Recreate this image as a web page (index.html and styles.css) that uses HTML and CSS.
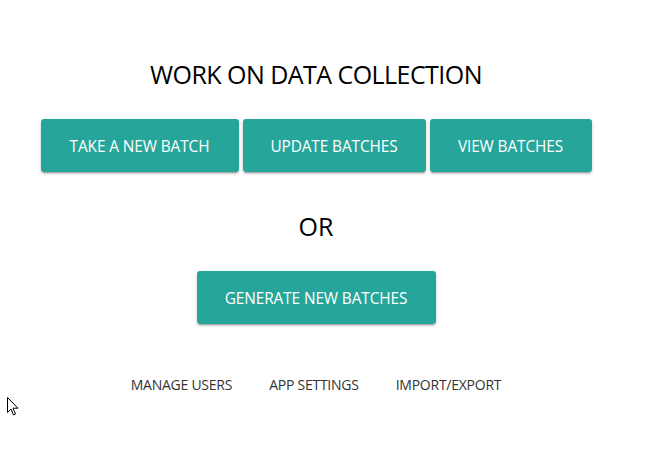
FILE: index.html
```html
<!DOCTYPE html>
<html>
<head>
<meta charset="utf-8">
<link rel="stylesheet" href="styles.css">
</head>
<body>
<main class="page">
  <h1 class="title">WORK ON DATA COLLECTION</h1>
  <div class="row">
    <a class="btn btn-take">TAKE A NEW BATCH</a>
    <a class="btn btn-update">UPDATE BATCHES</a>
    <a class="btn btn-view">VIEW BATCHES</a>
  </div>
  <h2 class="or">OR</h2>
  <div class="row">
    <a class="btn btn-gen">GENERATE NEW BATCHES</a>
  </div>
  <nav class="links">
    <a class="link">MANAGE USERS</a>
    <a class="link">APP SETTINGS</a>
    <a class="link">IMPORT/EXPORT</a>
  </nav>
</main>
<svg class="cursor" width="12" height="19" viewBox="0 0 12 19"><path d="M0.5 0.5 L0.5 15.5 L4 12 L6.5 18 L8.5 17 L6 11.2 L11 11.2 Z" fill="#fff" stroke="#000" stroke-width="1"/></svg>
</body>
</html>
```
FILE: styles.css
```css
html, body { margin: 0; padding: 0; background: #fff; }
body { font-family: "Open Sans", "Noto Sans", sans-serif; color: #000; width: 655px; height: 449px; overflow: hidden; position: relative; }
.page { width: 632px; display: flex; flex-direction: column; align-items: center; padding-top: 57px; }
.title { font-size: 25px; font-weight: 400; margin: 0; line-height: 34px; letter-spacing: -0.55px; }
.row { display: flex; gap: 4px; margin-top: 28px; }
.btn { background: #26a69a; color: #fff; font-size: 15.4px; height: 53px; box-sizing: border-box; padding-top: 2px; display: flex; align-items: center; justify-content: center; border-radius: 3px; box-shadow: 0 2px 2px 0 rgba(0,0,0,0.14), 0 1px 4px 0 rgba(0,0,0,0.12), 0 3px 1px -2px rgba(0,0,0,0.2); letter-spacing: -0.1px; }
.btn-take { width: 198px; }
.btn-update { width: 183px; }
.btn-view { width: 162px; }
.btn-gen { width: 239px; }
.or { font-size: 25px; font-weight: 400; margin: 37px 0 0; line-height: 34px; }
.links { display: flex; gap: 37px; margin-top: 51px; font-size: 14px; color: #333; letter-spacing: -0.25px; }
.cursor { position: absolute; left: 7px; top: 397px; }
```
